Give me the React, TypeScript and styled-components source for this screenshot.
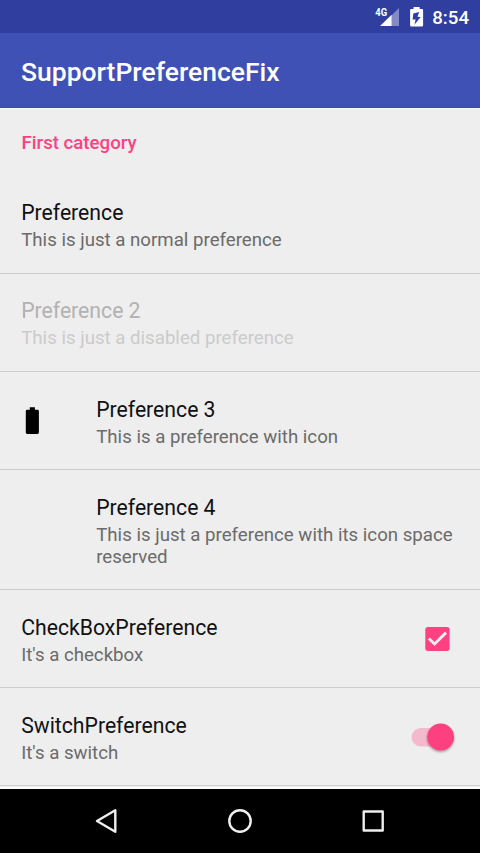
import React from "react";
import styled, { createGlobalStyle } from "styled-components";

const GlobalStyle = createGlobalStyle`
  * { box-sizing: border-box; }
  html, body { margin: 0; padding: 0; }
  body { font-family: Roboto, sans-serif; overflow: hidden; }
`;

const Screen = styled.div`
  width: 480px;
  height: 853px;
  display: flex;
  flex-direction: column;
  background: #eeeeee;
  overflow: hidden;
`;

const StatusBar = styled.header`
  flex: none;
  height: 33px;
  padding: 2px 11px 0 0;
  display: flex;
  align-items: center;
  justify-content: flex-end;
  background: #303f9f;
`;

const StatusIcons = styled.svg`
  display: block;
  width: 54px;
  height: 32px;
  margin-right: 6px;
`;

const Clock = styled.time`
  font-size: 18.67px;
  font-weight: 500;
  line-height: 32px;
  color: #ffffff;
`;

const AppBar = styled.div`
  flex: none;
  height: 75px;
  padding: 3px 21px 0;
  display: flex;
  align-items: center;
  background: #3f51b5;
  border-bottom: 1px solid #3648a5;
`;

const AppTitle = styled.h1`
  margin: 0;
  font-size: 26.5px;
  font-weight: 500;
  line-height: 32px;
  color: #ffffff;
`;

const List = styled.main`
  flex: none;
  height: 681px;
  overflow: hidden;
  border-top: 1px solid #fafafa;
  border-bottom: 2px solid #fafafa;
`;

const Category = styled.h2`
  margin: 0;
  height: 67px;
  padding: 23px 21.5px 0;
  font-size: 18.67px;
  font-weight: 500;
  line-height: 22px;
  color: #ff4081;
`;

const Row = styled.section<{ $tall?: boolean }>`
  height: ${(p) => (p.$tall ? 120 : 98)}px;
  padding: 0 21.2px;
  display: flex;
  border-bottom: 1px solid #cccccc;
`;

const IconSlot = styled.div`
  flex: none;
  width: 75px;
  display: flex;
  align-items: center;
`;

const BatteryDrawing = styled.svg`
  display: block;
  width: 22px;
  height: 32px;
`;

const Texts = styled.div<{ $low?: boolean }>`
  flex: 1;
  min-width: 0;
  padding-top: ${(p) => (p.$low ? 25 : 24)}px;
`;

const Title = styled.div<{ $disabled?: boolean }>`
  font-size: 21.2px;
  line-height: 26px;
  color: ${(p) => (p.$disabled ? "#b2b2b2" : "#111111")};
`;

const Summary = styled.div<{ $disabled?: boolean }>`
  padding-top: 3px;
  font-size: 18.67px;
  line-height: 22px;
  color: ${(p) => (p.$disabled ? "#cbcbcb" : "#6b6b6b")};
`;

const Widget = styled.svg`
  flex: none;
  align-self: center;
  display: block;
  width: 50px;
  height: 40px;
  margin-right: -1.2px;
`;

const NavBar = styled.nav`
  flex: none;
  height: 64px;
  padding: 0 40px;
  display: grid;
  grid-template-columns: repeat(3, 1fr);
  align-items: center;
  justify-items: center;
  background: #000000;
`;

const NavIcon = styled.svg`
  display: block;
  width: 32px;
  height: 32px;
  fill: none;
  stroke: #eeeeee;
  stroke-width: 2.4;
  stroke-linejoin: round;
`;

function BatteryIcon() {
  return (
    <BatteryDrawing viewBox="0 0 22 32">
      <path d="M8.8 2.2h5.1v2.6h2.6q1.4 0 1.4 1.4v21.3q0 1.4-1.4 1.4H6.2q-1.4 0-1.4-1.4V6.2q0-1.4 1.4-1.4h2.6z" />
    </BatteryDrawing>
  );
}

function Checkbox() {
  return (
    <Widget viewBox="0 0 50 40">
      <rect x="15.3" y="8" width="24.3" height="24" rx="2.7" fill="#ff4081" />
      <path d="M18.8 19.5l5.7 5.5L36 13.6" fill="none" stroke="#eeeeee" strokeWidth="2.9" />
    </Widget>
  );
}

function Toggle() {
  return (
    <Widget viewBox="0 0 50 40">
      <defs>
        <filter id="thumbShadow" x="-30%" y="-30%" width="160%" height="160%">
          <feDropShadow dx="0" dy="1.4" stdDeviation="1" floodColor="#000" floodOpacity="0.38" />
        </filter>
      </defs>
      <rect x="1.6" y="11" width="38" height="18.4" rx="9.2" fill="#f3b9cd" />
      <circle cx="30.6" cy="20" r="13.4" fill="#fc3f80" filter="url(#thumbShadow)" />
    </Widget>
  );
}

type Preference = {
  title: string;
  summary: string;
  disabled?: boolean;
  iconSpace?: boolean;
  icon?: React.ReactNode;
  tall?: boolean;
  low?: boolean;
  widget?: React.ReactNode;
};

const preferences: Preference[] = [
  { title: "Preference", summary: "This is just a normal preference" },
  { title: "Preference 2", summary: "This is just a disabled preference", disabled: true },
  {
    title: "Preference 3",
    summary: "This is a preference with icon",
    iconSpace: true,
    icon: <BatteryIcon />,
    low: true,
  },
  {
    title: "Preference 4",
    summary: "This is just a preference with its icon space reserved",
    iconSpace: true,
    tall: true,
    low: true,
  },
  { title: "CheckBoxPreference", summary: "It's a checkbox", low: true, widget: <Checkbox /> },
  { title: "SwitchPreference", summary: "It's a switch", low: true, widget: <Toggle /> },
];

export default function App() {
  return (
    <Screen>
      <GlobalStyle />
      <StatusBar>
        <StatusIcons viewBox="372 1 54 32">
          <text x="375.3" y="14.6" fontSize="11" fontWeight="700" fill="#fff" textLength="11.8" lengthAdjust="spacingAndGlyphs">
            4G
          </text>
          <path d="M399 7v18h-7.3V14.3z" fill="#fff" fillOpacity=".4" />
          <path d="M380 25l11.7-11.2V25z" fill="#fff" />
          <path
            fillRule="evenodd"
            fill="#fff"
            d="M413.6 6h6v2h2.2q1.3 0 1.3 1.3v15q0 1.3-1.3 1.3h-10.4q-1.3 0-1.3-1.3v-15q0-1.3 1.3-1.3h2.2zM419.2 10.9l-5.9 1.5-.7 6 3 .1-1.2 5.2 6.3-7.8-3.2-.2z"
          />
        </StatusIcons>
        <Clock>8:54</Clock>
      </StatusBar>
      <AppBar>
        <AppTitle>SupportPreferenceFix</AppTitle>
      </AppBar>
      <List>
        <Category>First category</Category>
        {preferences.map((p) => (
          <Row key={p.title} $tall={p.tall}>
            {p.iconSpace && <IconSlot>{p.icon}</IconSlot>}
            <Texts $low={p.low}>
              <Title $disabled={p.disabled}>{p.title}</Title>
              <Summary $disabled={p.disabled}>{p.summary}</Summary>
            </Texts>
            {p.widget}
          </Row>
        ))}
      </List>
      <NavBar>
        <NavIcon viewBox="0 0 32 32">
          <path d="M6 16l18.3-10.7v21.4z" />
        </NavIcon>
        <NavIcon viewBox="0 0 32 32">
          <circle cx="16" cy="16" r="10.7" />
        </NavIcon>
        <NavIcon viewBox="0 0 32 32">
          <rect x="6.7" y="6.5" width="19" height="19" />
        </NavIcon>
      </NavBar>
    </Screen>
  );
}
